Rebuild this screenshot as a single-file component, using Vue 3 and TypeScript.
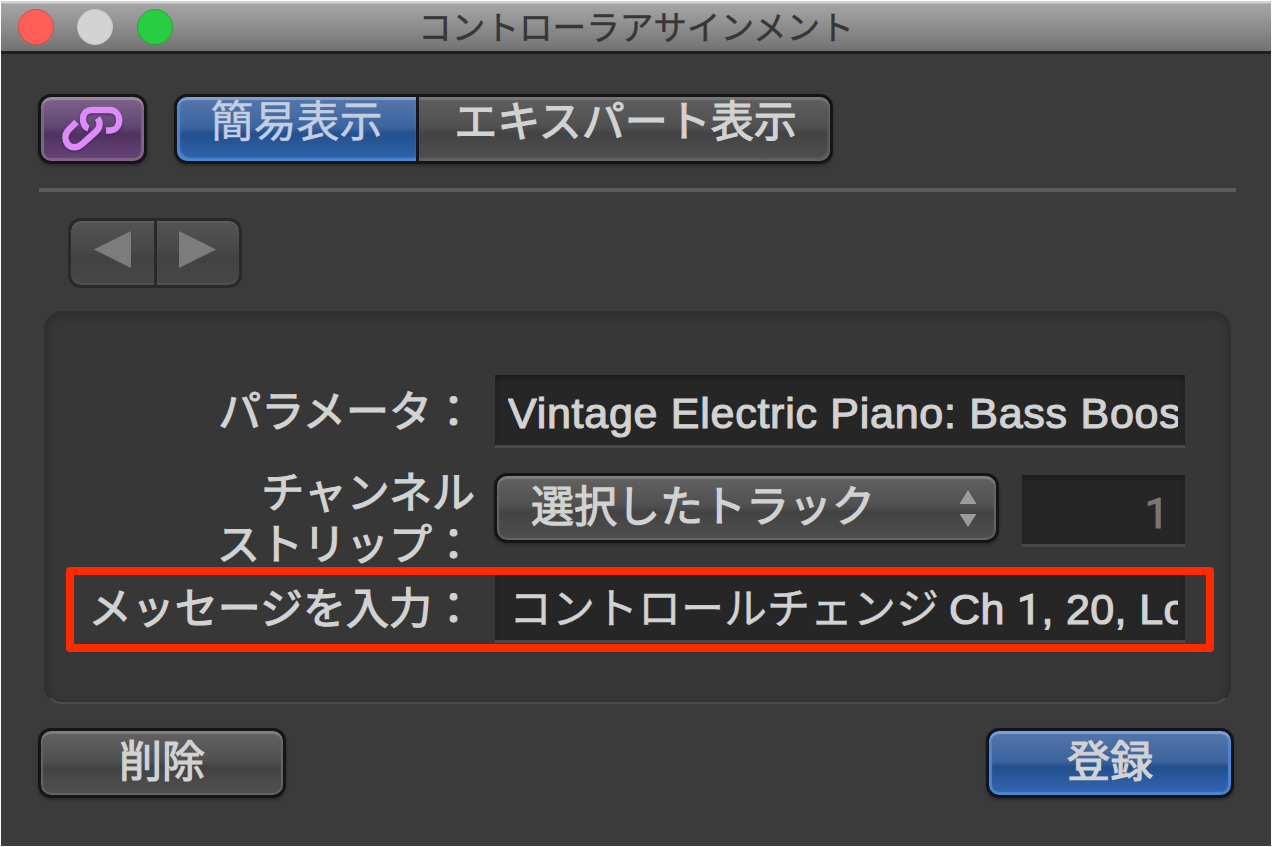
<script setup lang="ts">
const lights = ['close', 'minimize', 'zoom']
</script>

<template>
  <div class="window">
    <header class="titlebar">
      <div class="lights">
        <i v-for="light in lights" :key="light" class="light" :class="light"></i>
      </div>
      <h1 class="title">コントローラアサインメント</h1>
    </header>

    <main class="body">
      <div class="toolbar">
        <button class="btn link" aria-label="link">
          <svg class="link-icon" width="66" height="50" viewBox="0 0 66 50">
            <g fill="none" stroke="#dc8cf8" stroke-width="6.4">
              <path d="M16.5 18 L8.5 26 C2.5 32.5 6 43.3 14.3 43.3 C18 43.3 20 42 22 40 L35.5 28 C40.5 23.5 40.5 18 37.5 14" />
              <path d="M28.5 24.5 C21 22 20 6 32 6 L49.5 6 C62.5 6 62.5 26.5 49.5 26.5 L46 26.5" />
            </g>
          </svg>
        </button>
        <div class="segments">
          <button class="seg active"><span class="t light-text">簡易表示</span></button>
          <button class="seg"><span class="t bold-text">エキスパート表示</span></button>
        </div>
      </div>

      <div class="rule"></div>

      <div class="nav">
        <button class="nav-btn" aria-label="previous">
          <svg width="37" height="37" viewBox="0 0 37 37"><path d="M0 18.5 37 0V37Z" fill="#7c7c7c" /></svg>
        </button>
        <button class="nav-btn" aria-label="next">
          <svg width="37" height="37" viewBox="0 0 37 37"><path d="M37 18.5 0 0V37Z" fill="#7c7c7c" /></svg>
        </button>
      </div>

      <section class="panel">
        <div class="row parameter">
          <label class="label">パラメータ：</label>
          <div class="field"><div class="clip"><span class="latin wide">Vintage Electric Piano: Bass Boost</span></div></div>
        </div>
        <div class="row channel">
          <label class="label"><span class="line">チャンネル</span><span class="line">ストリップ：</span></label>
          <button class="btn select">
            <span class="t">選択したトラック</span>
            <svg class="stepper" width="18" height="37" viewBox="0 0 18 37">
              <path d="M9 0 17.5 14H.5ZM9 37 .5 24H17.5Z" fill="#9b9b9b" />
            </svg>
          </button>
          <div class="field number"><span class="latin one">1</span></div>
        </div>
        <div class="row message">
          <label class="label">メッセージを入力：</label>
          <div class="field"><div class="clip"><span class="kana">コントロールチェンジ</span><span class="latin tail">Ch <span class="one">1</span>, 20, Lo</span></div></div>
          <div class="highlight"></div>
        </div>
      </section>

      <footer class="footer">
        <button class="btn"><span class="t">削除</span></button>
        <button class="btn primary"><span class="t">登録</span></button>
      </footer>
    </main>
  </div>
</template>

<style>
html,
body {
  margin: 0;
  background: #fff;
  overflow: hidden;
}
</style>

<style scoped>
* {
  box-sizing: border-box;
}

.window {
  width: 1270px;
  height: 845px;
  margin: 1px;
  background: #3b3b3b;
  color: #d2d2d2;
  font-family: "Liberation Sans", "Noto Sans CJK JP", sans-serif;
  font-size: 43px;
  line-height: 64px;
  white-space: nowrap;
}

button {
  padding: 0;
  margin: 0;
  border: 0;
  font: inherit;
  color: inherit;
}

.titlebar {
  position: relative;
  display: flex;
  align-items: center;
  justify-content: center;
  height: 53px;
  border-bottom: 3px solid #1d1d1d;
  background: linear-gradient(#d2d2d2 0, #d2d2d2 2px, #a5a5a5 3px, #9a9a9a 14px, #727272 50px);
}

.lights {
  position: absolute;
  left: 16.5px;
  top: 8px;
  display: flex;
  gap: 23.7px;
}

.light {
  width: 36px;
  height: 36px;
  border-radius: 50%;
}

.close {
  background: #ff5f57;
  border: 1px solid #df4a43;
}

.minimize {
  background: #d3d3d3;
  border: 1px solid #c6c6c6;
}

.zoom {
  background: #28cd41;
  border: 1px solid #1fad32;
}

.title {
  margin: 0;
  padding-top: 5px;
  font-size: 33.6px;
  font-weight: 400;
  line-height: 50px;
  color: #363636;
  -webkit-text-stroke: 0.4px currentColor;
}

.body {
  padding: 40px 36px 0 37px;
}

.toolbar {
  display: flex;
  gap: 27px;
}

.btn {
  display: flex;
  justify-content: center;
  height: 70px;
  border: 3px solid #151515;
  border-radius: 13px;
  background: linear-gradient(#626262, #505050 47%, #434343 56%, #505050);
  box-shadow: inset 0 3px 1px #7e7e7e, inset 0 0 1px 2px #646464, 0 2px 3px #2a2a2a;
}

.t {
  line-height: 62px;
  -webkit-text-stroke: 1.2px currentColor;
}

.link {
  width: 109px;
  align-items: center;
  background: linear-gradient(#7d6589, #624675 45%, #50325f 58%, #674578);
  box-shadow: inset 0 3px 1px #9e86a7, inset 0 0 1px 3px #806388, 0 2px 3px #2a2a2a;
}

.link-icon {
  filter: drop-shadow(0 1px 1px #44264f);
}

.segments {
  display: flex;
  width: 659px;
  height: 70px;
  border: 3px solid #151515;
  border-radius: 13px;
  overflow: hidden;
  box-shadow: 0 2px 3px #2a2a2a;
}

.seg {
  display: flex;
  flex: 1;
  justify-content: center;
  background: linear-gradient(#606060, #505050 47%, #434343 57%, #505050);
  box-shadow: inset 0 3px 1px #777, inset -2px -3px 2px #616161;
  border-radius: 0 10px 10px 0;
}

.seg.active {
  flex: 0 0 242px;
  border-right: 3px solid #14181f;
  border-radius: 10px 0 0 10px;
  background: linear-gradient(#5677aa, #3c65a0 47%, #234f8d 58%, #3166b0);
  box-shadow: inset 0 3px 1px #7fa0d0, inset 3px -3px 2px #4e88d4;
}

.light-text {
  color: #c3cee0;
  -webkit-text-stroke: 0.5px currentColor;
  line-height: 50px;
}

.bold-text {
  padding-left: 2px;
  line-height: 50px;
}

.rule {
  height: 4px;
  margin: 24px 0 0 1px;
  width: 1197px;
  background: #5c5c5c;
}

.nav {
  display: flex;
  width: 174px;
  height: 70px;
  margin: 26px 0 0 30px;
  border: 3px solid #292929;
  border-radius: 13px;
  background: #292929;
  overflow: hidden;
  gap: 3px;
}

.nav-btn {
  flex: 1;
  display: flex;
  justify-content: center;
  align-items: flex-start;
  padding-top: 10px;
  background: linear-gradient(#535353, #484848 47%, #424242 56%, #484848);
  box-shadow: inset 0 2px 1px #5c5c5c, inset 0 -2px 1px #505050;
}

.nav-btn:first-child {
  border-radius: 10px 0 0 10px;
}

.nav-btn:last-child {
  border-radius: 0 10px 10px 0;
}

.panel {
  display: flex;
  flex-direction: column;
  width: 1187px;
  height: 393px;
  margin: 23px 0 0 6px;
  padding-top: 62px;
  border: 2px solid #303030;
  border-bottom-color: #4a4a4a;
  border-radius: 18px;
  background: #373737;
  box-shadow: inset 0 2px 8px #2b2b2b;
}

.row {
  position: relative;
  display: flex;
  height: 100px;
}

.row.channel {
  height: 95px;
}

.label {
  width: 429px;
  margin-right: 20px;
  text-align: right;
  line-height: 75px;
  -webkit-text-stroke: 1.2px currentColor;
}

.channel .label {
  margin-top: -8px;
}

.message .label {
  line-height: 78px;
}

.line {
  display: block;
  line-height: 52px;
}

.field {
  width: 690px;
  height: 73px;
  padding: 0 7px 0 13px;
  border-bottom: 3px solid #494949;
  background: #262626;
  box-shadow: inset 0 3px 4px #1c1c1c;
  line-height: 77px;
}

.message .field {
  padding-left: 14px;
  line-height: 79px;
}

.clip {
  display: flex;
  overflow: hidden;
  height: 70px;
}

.latin {
  -webkit-text-stroke: 1.2px currentColor;
}

.wide {
  letter-spacing: 0.73px;
}

.kana {
  -webkit-text-stroke: 0.5px currentColor;
}

.tail {
  margin-left: 10px;
  letter-spacing: 0.35px;
}

.one {
  font-family: Roboto, sans-serif;
}

.select {
  position: relative;
  width: 505px;
  margin: -2px 0 0 -1px;
  justify-content: flex-start;
  padding-left: 34px;
}

.select .t {
  line-height: 63px;
}

.stepper {
  position: absolute;
  right: 19px;
  top: 14px;
}

.number {
  width: 163px;
  height: 72px;
  margin-left: 23px;
  padding-right: 16px;
  text-align: right;
  color: #777;
}

.highlight {
  position: absolute;
  left: 20px;
  top: -3px;
  width: 1148px;
  height: 85px;
  border: 8px solid #ff2a00;
  border-radius: 4px;
}

.footer {
  display: flex;
  justify-content: space-between;
  margin-top: 24px;
  width: 1196px;
}

.footer .btn {
  width: 248px;
}

.primary {
  border-color: #10141c;
  background: linear-gradient(#5475aa, #3c65a0 47%, #234f8d 56%, #3468b5);
  box-shadow: inset 0 3px 1px #7fa0d0, inset 0 0 1px 3px #4e86d2, 0 2px 3px #2a2a2a;
}
</style>
